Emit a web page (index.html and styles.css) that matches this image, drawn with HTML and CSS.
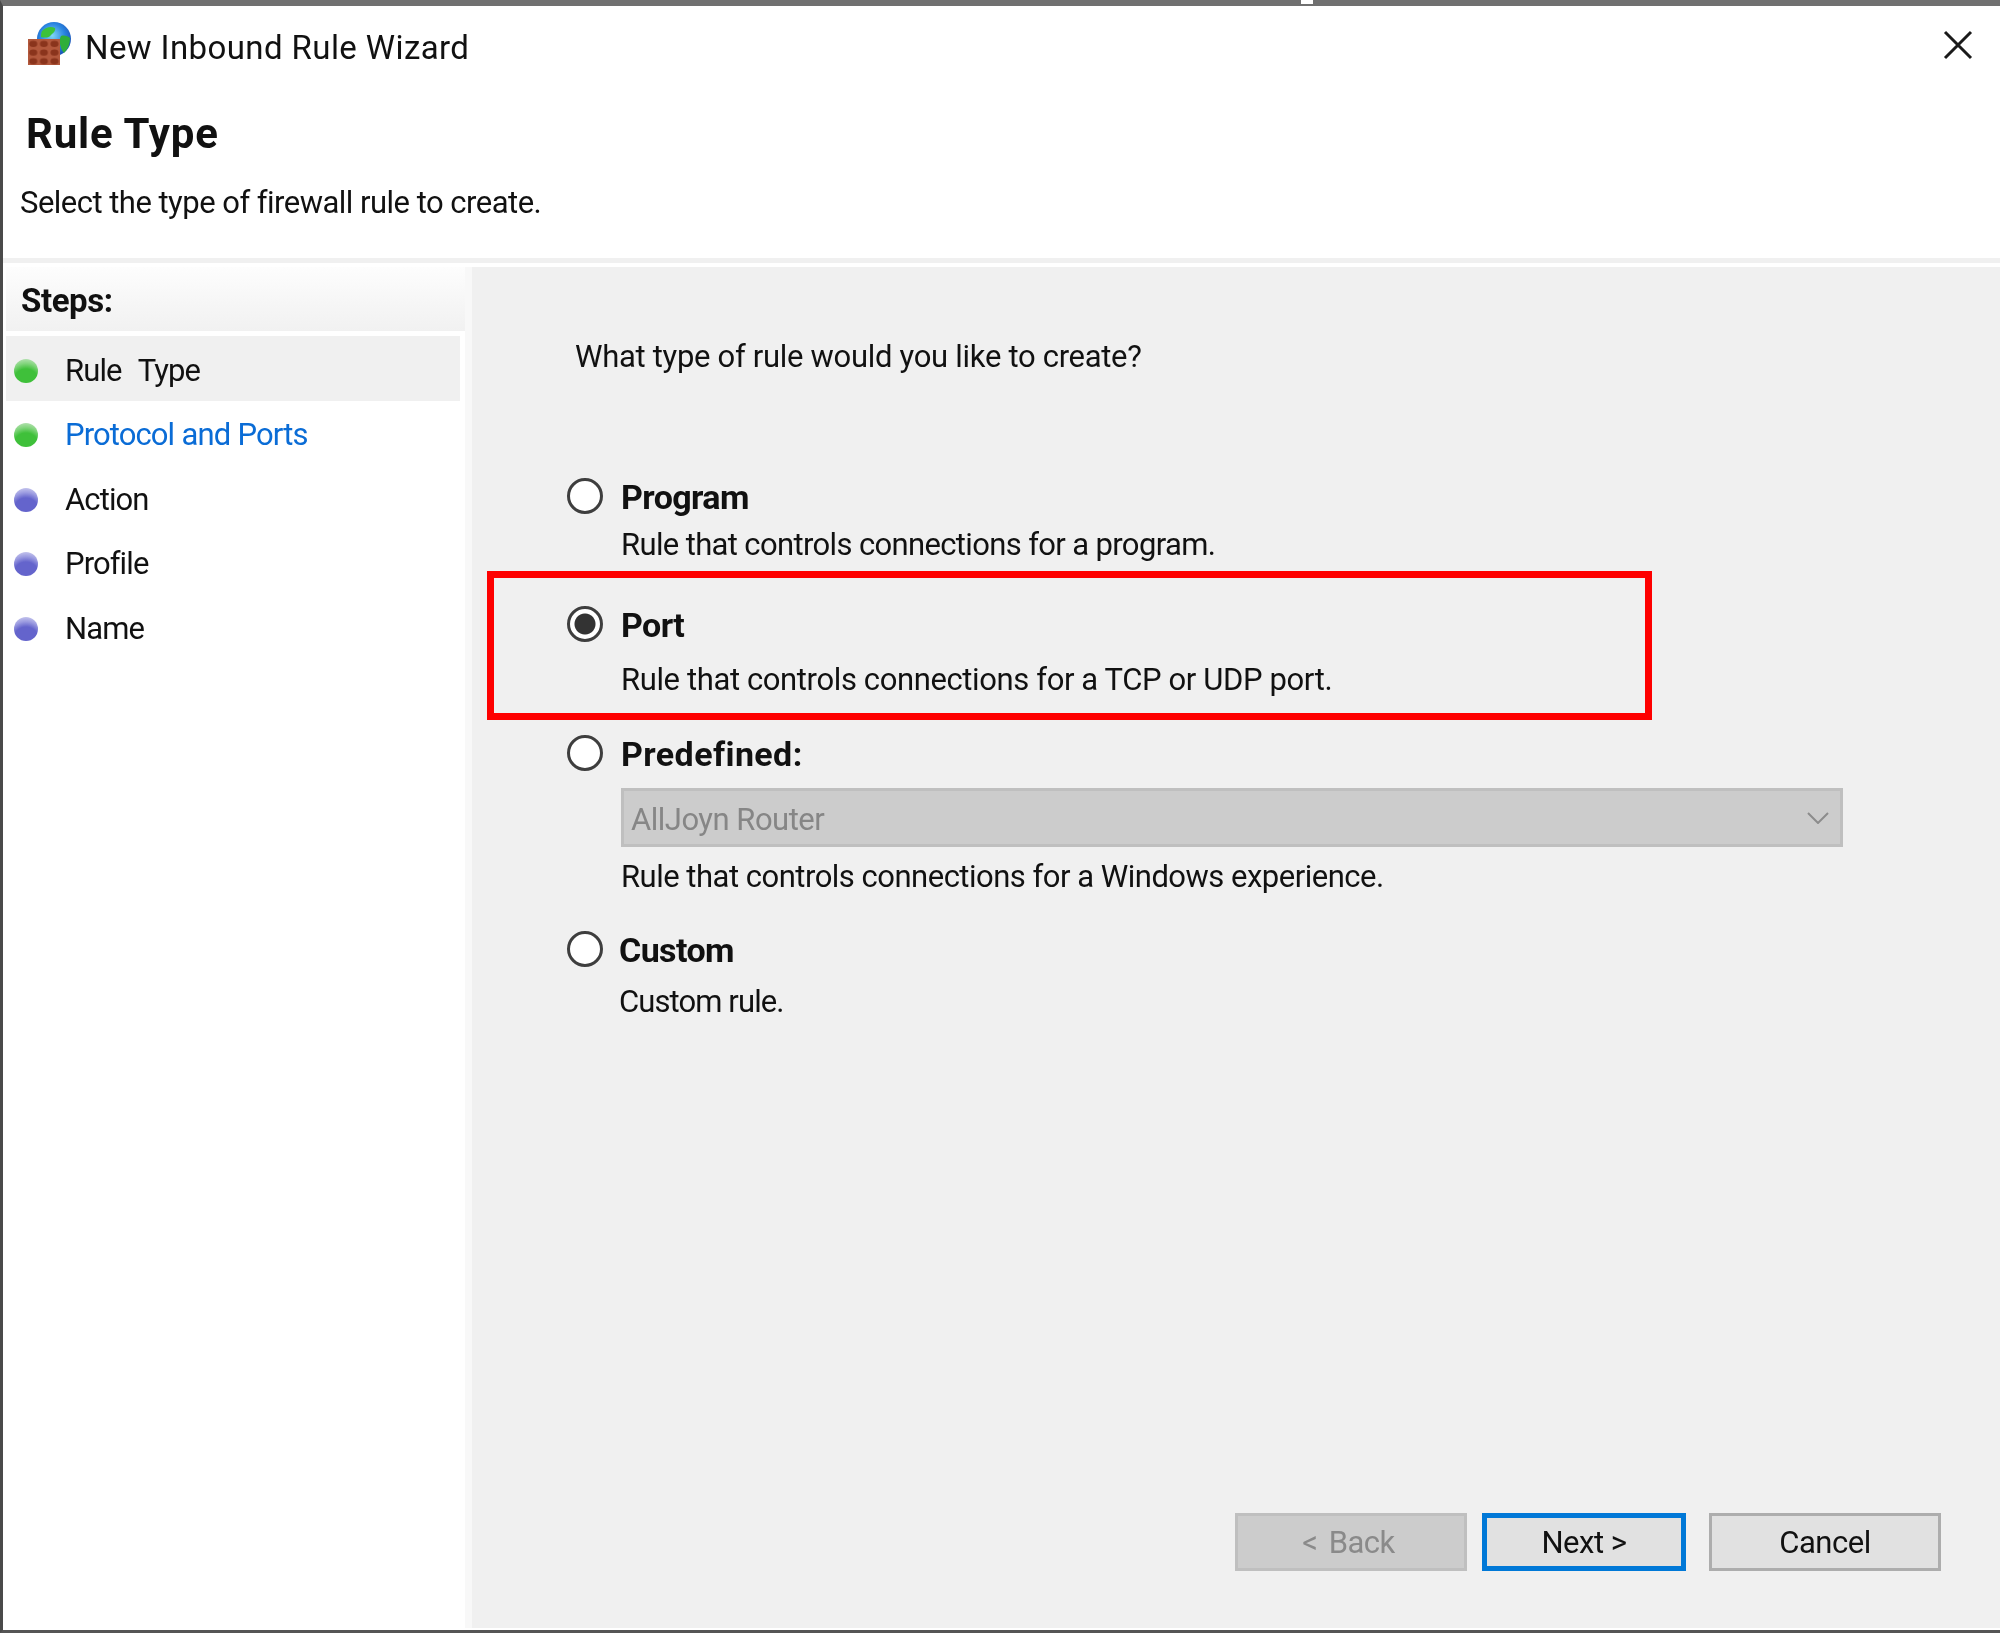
FILE: index.html
```html
<!DOCTYPE html>
<html lang="en">
<head>
<meta charset="utf-8">
<title>New Inbound Rule Wizard</title>
<link rel="stylesheet" href="styles.css">
</head>
<body>
<div class="window">
  <div class="titlebar">
    <svg class="app-icon" viewBox="0 0 44 44" aria-hidden="true">
      <defs>
        <radialGradient id="globe" cx="45%" cy="40%" r="60%">
          <stop offset="0" stop-color="#7fd6f5"/>
          <stop offset=".6" stop-color="#2a84e0"/>
          <stop offset="1" stop-color="#1c55b8"/>
        </radialGradient>
        <pattern id="bricks" width="10.6" height="8.67" patternUnits="userSpaceOnUse">
          <rect width="10.6" height="8.67" fill="#b2583c"/>
          <ellipse cx="5.3" cy="4.6" rx="4" ry="3.2" fill="#8a341c"/>
        </pattern>
      </defs>
      <circle cx="26" cy="17" r="17" fill="url(#globe)"/>
      <path d="M14 9c4-4 9-5 13-3 1 3-2 5-4 7-2 3-6 3-10 2 0-2 0-4 1-6z" fill="#3cc23a"/>
      <path d="M33 14c3-1 7 0 9 2 0 6-2 11-6 15-3-3-6-12-3-17z" fill="#2fae3a"/>
      <rect x="0" y="17" width="32" height="26" fill="url(#bricks)"/>
    </svg>
    <span class="title">New Inbound Rule Wizard</span>
    <svg class="close" viewBox="0 0 30 30" aria-hidden="true"><path d="M2 2L28 28M28 2L2 28"/></svg>
  </div>
  <div class="header">
    <h1 class="heading">Rule Type</h1>
    <p class="subheading">Select the type of firewall rule to create.</p>
  </div>
  <div class="content">
    <aside class="sidebar">
      <div class="steps-head">Steps:</div>
      <ul class="steps">
        <li class="step step-current"><span class="dot dot-done"></span>Rule Type</li>
        <li class="step step-link"><span class="dot dot-done"></span>Protocol and Ports</li>
        <li class="step"><span class="dot dot-todo"></span>Action</li>
        <li class="step"><span class="dot dot-todo"></span>Profile</li>
        <li class="step"><span class="dot dot-todo"></span>Name</li>
      </ul>
    </aside>
    <main class="main">
      <p class="question">What type of rule would you like to create?</p>
      <div class="options">
        <div class="option option-program">
          <span class="radio"></span>
          <div class="label">Program</div>
          <div class="desc">Rule that controls connections for a program.</div>
        </div>
        <div class="option option-port">
          <span class="radio radio-on"></span>
          <div class="label">Port</div>
          <div class="desc">Rule that controls connections for a TCP or UDP port.</div>
        </div>
        <div class="option option-predefined">
          <span class="radio"></span>
          <div class="label">Predefined:</div>
          <div class="combo">
            <span>AllJoyn Router</span>
            <svg class="chevron" viewBox="0 0 22 12" aria-hidden="true"><path d="M1 1L11 11L21 1"/></svg>
          </div>
          <div class="desc">Rule that controls connections for a Windows experience.</div>
        </div>
        <div class="option option-custom">
          <span class="radio"></span>
          <div class="label">Custom</div>
          <div class="desc">Custom rule.</div>
        </div>
      </div>
      <div class="highlight"></div>
      <div class="buttons">
        <button class="btn btn-back" type="button" disabled>&lt; Back</button>
        <button class="btn btn-next" type="button">Next &gt;</button>
        <button class="btn btn-cancel" type="button">Cancel</button>
      </div>
    </main>
  </div>
</div>
</body>
</html>
```
FILE: styles.css
```css
* { box-sizing: border-box; }
html, body { margin: 0; padding: 0; overflow: hidden; background: #fff; }
body { font-family: Roboto, "Liberation Sans", sans-serif; color: #111; }

.window {
  position: relative;
  width: 2000px;
  height: 1633px;
  display: flex;
  flex-direction: column;
  background: #fff;
  border-top: 6px solid #707070;
  border-left: 3px solid #4a4a4a;
  border-bottom: 3px solid #555;
  padding-bottom: 2px;
  filter: blur(0.6px);
}
.window::before {
  content: "";
  position: absolute;
  left: 1298px;
  top: -6px;
  width: 12px;
  height: 4px;
  background: #fff;
}

.titlebar {
  height: 82px;
  display: flex;
  align-items: center;
  padding-left: 25px;
  padding-right: 27px;
}
.app-icon { width: 44px; height: 44px; margin-right: 13px; margin-top: -6px; flex: none; }
.title { font-size: 33px; letter-spacing: 0.4px; flex: 1; }
.close { width: 30px; height: 30px; fill: none; stroke: #1a1a1a; stroke-width: 3; margin-top: -4px; }

.header {
  height: 175px;
  border-bottom: 5px solid #f0f0f0;
  margin-bottom: 4px;
}
.heading {
  margin: 24px 0 0 23px;
  font-size: 42px;
  line-height: 44px;
  font-weight: 700;
  letter-spacing: 0.8px;
}
.subheading {
  margin: 25px 0 0 17px;
  font-size: 31px;
  line-height: 44px;
  letter-spacing: -0.52px;
}

.content { flex: 1; display: flex; min-height: 0; }

.sidebar { width: 469px; flex: none; background: #fff; padding-left: 3px; border-right: 7px solid #f8f8f8; }
.steps-head {
  height: 64px;
  padding: 2px 0 0 15px;
  font-size: 33px;
  font-weight: 700;
  line-height: 64px;
  letter-spacing: -0.4px;
  background: linear-gradient(#fdfdfd, #f1f1f1);
}
.steps { list-style: none; margin: 5px 0 0; padding: 0; }
.step {
  height: 64.5px;
  display: flex;
  align-items: center;
  margin-right: 5px;
  padding: 4px 0 0 8px;
  font-size: 31px;
  letter-spacing: -0.9px;
  word-spacing: 0.5px;
}
.step-current { background: #f0f0f0; word-spacing: 10px; }
.step-link { color: #0a6cd6; }
.dot {
  width: 24px;
  height: 24px;
  border-radius: 50%;
  margin: 1px 27px 0 0;
  flex: none;
}
.dot-done { background: radial-gradient(circle at 50% 95%, #3fc03a 50%, #7fd47a 70%, #cfe8cc 100%); }
.dot-todo { background: radial-gradient(circle at 50% 95%, #6464cc 50%, #9a9ae0 70%, #dcdcf4 100%); }

.main {
  position: relative;
  flex: 1;
  min-width: 0;
  background: #f0f0f0;
  display: flex;
  flex-direction: column;
  padding-top: 68px;
}
.question {
  margin: 0 0 96px 103px;
  font-size: 31px;
  line-height: 44px;
  letter-spacing: -0.3px;
}
.options { padding-left: 95px; }
.option {
  display: grid;
  grid-template-columns: 54px 1fr;
  font-size: 31px;
  line-height: 44px;
  letter-spacing: -0.5px;
}
.label { font-size: 34px; font-weight: 700; letter-spacing: -0.6px; }
.desc { grid-column: 2; }
.radio {
  width: 36px;
  height: 36px;
  margin-top: 3px;
  border-radius: 50%;
  background: #fff;
  border: 3px solid #3e3e3e;
}
.radio-on { background: radial-gradient(circle, #333 0 10px, #fff 11px); }

.option-program { row-gap: 4px; margin-bottom: 36px; }
.option-program .desc { letter-spacing: -0.64px; }
.option-port { row-gap: 11px; margin-bottom: 30px; }
.option-port .desc { letter-spacing: -0.38px; }
.option-predefined { margin-bottom: 29px; }
.option-predefined .label { letter-spacing: 0.4px; }
.option-custom { row-gap: 8px; }
.option-custom .label, .option-custom .desc { margin-left: -2px; }
.option-custom .desc { letter-spacing: -0.9px; }

.combo {
  grid-column: 2;
  height: 59px;
  width: 1222px;
  margin: 12px 0 8px;
  padding: 4px 11px 0 7px;
  display: flex;
  align-items: center;
  justify-content: space-between;
  background: #cccccc;
  border: 3px solid #bfbfbf;
  color: #868686;
}
.chevron { width: 22px; height: 12px; fill: none; stroke: #8c8c8c; stroke-width: 2; margin-top: -4px; }

.highlight {
  position: absolute;
  left: 15px;
  top: 304px;
  width: 1165px;
  height: 149px;
  border: 7px solid #fe0000;
}

.buttons {
  margin-top: auto;
  display: flex;
  justify-content: flex-end;
  padding: 0 59px 57px 0;
}
.btn {
  height: 58px;
  font: 400 31px/1 Roboto, "Liberation Sans", sans-serif;
  letter-spacing: -0.5px;
  color: #111;
  background: #e1e1e1;
  padding: 0;
}
.btn-back {
  width: 232px;
  margin-right: 15px;
  padding-right: 5px;
  color: #8a8a8a;
  background: #cccccc;
  border: 3px solid #bfbfbf;
  word-spacing: 4px;
}
.btn-next {
  width: 204px;
  margin-right: 23px;
  border: 5px solid #0078d7;
}
.btn-cancel {
  width: 232px;
  border: 3px solid #adadad;
}
```
